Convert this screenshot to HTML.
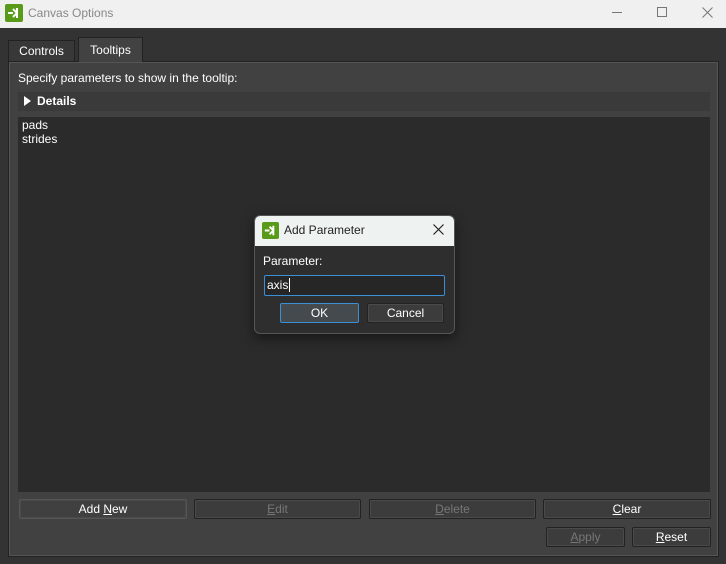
<!DOCTYPE html><html><head><style>
*{box-sizing:border-box;margin:0;padding:0}
body{width:726px;height:564px;background:#333;font-family:"Liberation Sans",sans-serif;font-size:12px;color:#fff;position:relative;overflow:hidden}
.a{position:absolute}
.btn{position:absolute;height:20px;border:1px solid #222;border-radius:2px;background:#3c3c3c;text-align:center;line-height:18px;color:#fff;box-shadow:inset 0 0 0 1px #4a4a4a}
.dis{color:#777}
u{text-decoration:underline}
</style></head><body>
<div class="a" style="left:0;top:0;width:726px;height:28px;background:#f0f0f0"></div>
<svg class="a" style="left:5px;top:4px" width="18" height="18" viewBox="0 0 18 18"><rect width="18" height="18" rx="2" fill="#5a9a1a"/><path d="M3 9h5M8 5l4 4-4 4M12 4v10" stroke="#fff" stroke-width="2" fill="none"/></svg>
<div class="a" style="left:28px;top:6px;color:#888;font-size:12px">Canvas Options</div>
<div class="a" style="left:612px;top:12px;width:10px;height:1px;background:#777"></div>
<div class="a" style="left:657px;top:7px;width:10px;height:10px;border:1px solid #777"></div>
<svg class="a" style="left:702px;top:7px" width="11" height="11"><path d="M0.5 0.5L10.5 10.5M10.5 0.5L0.5 10.5" stroke="#777" stroke-width="1"/></svg>
<div class="a" style="left:8px;top:40px;width:67px;height:22px;background:#383838;border:1px solid #222;border-bottom:none;text-align:center;line-height:21px">Controls</div>
<div class="a" style="left:78px;top:37px;width:65px;height:25px;background:#424242;border:1px solid #222;border-bottom:none;text-align:center;line-height:24px;z-index:2">Tooltips</div>
<div class="a" style="left:8px;top:61px;width:711px;height:496px;background:#414141;border:1px solid #222;box-shadow:inset 0 0 0 1px #555"></div>
<div class="a" style="left:18px;top:71px">Specify parameters to show in the tooltip:</div>
<div class="a" style="left:18px;top:92px;width:692px;height:19px;background:#3a3a3a"></div>
<svg class="a" style="left:24px;top:96px" width="7" height="10"><path d="M0 0L7 5L0 10Z" fill="#fff"/></svg>
<div class="a" style="left:37px;top:94px;font-weight:bold">Details</div>
<div class="a" style="left:18px;top:117px;width:692px;height:375px;background:#2b2b2b"></div>
<div class="a" style="left:22px;top:118px;line-height:14px">pads<br>strides</div>
<div class="btn" style="left:19px;top:499px;width:168px;border-color:#555;background:#404040">Add <u>N</u>ew</div>
<div class="btn dis" style="left:194px;top:499px;width:167px"><u>E</u>dit</div>
<div class="btn dis" style="left:369px;top:499px;width:167px"><u>D</u>elete</div>
<div class="btn" style="left:543px;top:499px;width:168px"><u>C</u>lear</div>
<div class="btn dis" style="left:546px;top:527px;width:79px"><u>A</u>pply</div>
<div class="btn" style="left:632px;top:527px;width:79px"><u>R</u>eset</div>
<div class="a" style="left:254px;top:215px;width:201px;height:119px;background:#2e2e2e;border:1px solid #555;border-radius:6px;overflow:hidden;box-shadow:0 4px 12px rgba(0,0,0,.5)">
<div class="a" style="left:0;top:0;width:201px;height:30px;background:#eef2f0"></div>
<svg class="a" style="left:7px;top:6px" width="17" height="17" viewBox="0 0 18 18"><rect width="18" height="18" rx="2" fill="#5a9a1a"/><path d="M3 9h5M8 5l4 4-4 4M12 4v10" stroke="#fff" stroke-width="2" fill="none"/></svg>
<div class="a" style="left:29px;top:7px;color:#222">Add Parameter</div>
<svg class="a" style="left:178px;top:8px" width="11" height="11"><path d="M0.5 0.5L10.5 10.5M10.5 0.5L0.5 10.5" stroke="#222" stroke-width="1.2"/></svg>
<div class="a" style="left:8px;top:38px">Parameter:</div>
<div class="a" style="left:9px;top:59px;width:181px;height:21px;background:#262626;border:1px solid #3a8fd6;border-radius:2px;padding-left:2px;line-height:19px">axis<span style="border-left:1px solid #fff;margin-left:1px"></span></div>
<div class="btn" style="left:25px;top:87px;width:79px;border-color:#3a8fd6;background:#454a4e">OK</div>
<div class="btn" style="left:112px;top:87px;width:77px">Cancel</div>
</div>
</body></html>
